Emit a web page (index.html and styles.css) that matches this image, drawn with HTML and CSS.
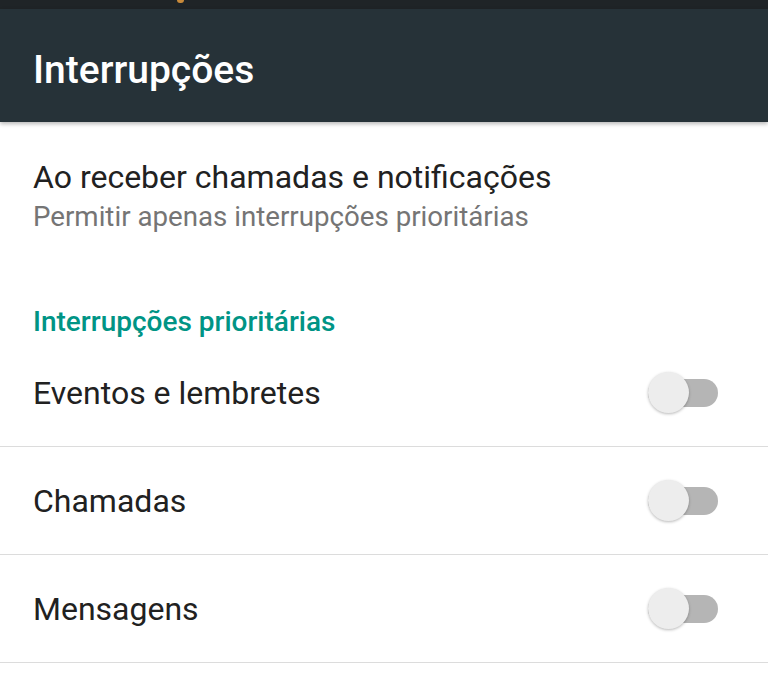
FILE: index.html
```html
<!DOCTYPE html>
<html lang="pt">
<head>
<meta charset="utf-8">
<title>Interrupções</title>
<link rel="stylesheet" href="styles.css">
</head>
<body>
<div class="statusbar"><span class="status-dot"></span></div>
<header class="toolbar">
  <h1 class="toolbar-title">Interrupções</h1>
</header>
<main class="content">
  <section class="pref">
    <div class="pref-title">Ao receber chamadas e notificações</div>
    <div class="pref-summary">Permitir apenas interrupções prioritárias</div>
  </section>
  <div class="category">Interrupções prioritárias</div>
  <div class="row">
    <span class="row-label">Eventos e lembretes</span>
    <span class="switch"><span class="track"></span><span class="thumb"></span></span>
  </div>
  <div class="row">
    <span class="row-label">Chamadas</span>
    <span class="switch"><span class="track"></span><span class="thumb"></span></span>
  </div>
  <div class="row">
    <span class="row-label">Mensagens</span>
    <span class="switch"><span class="track"></span><span class="thumb"></span></span>
  </div>
</main>
</body>
</html>
```
FILE: styles.css
```css
html, body {
  margin: 0;
  padding: 0;
  background: #ffffff;
  font-family: Roboto, "Noto Sans", "Liberation Sans", sans-serif;
  overflow: hidden;
}

.statusbar {
  height: 9px;
  background: #1f2427;
  position: relative;
}

.status-dot {
  position: absolute;
  left: 177px;
  top: 0;
  width: 7px;
  height: 3px;
  border-radius: 0 0 4px 4px;
  background: #c98a3a;
}

.toolbar {
  box-sizing: border-box;
  height: 113px;
  background: #263238;
  padding: 41px 33px 0;
  box-shadow: 0 2px 4px rgba(0, 0, 0, 0.28);
  position: relative;
  z-index: 1;
}

.toolbar-title {
  margin: 0;
  font-size: 39px;
  line-height: 40px;
  font-weight: 500;
  color: #ffffff;
}

.content {
  display: flex;
  flex-direction: column;
}

.pref {
  padding: 37px 33px 0;
}

.pref-title {
  font-size: 32px;
  line-height: 36px;
  color: #212121;
}

.pref-summary {
  margin-top: 6px;
  font-size: 27.7px;
  line-height: 32px;
  color: #757575;
}

.category {
  box-sizing: border-box;
  height: 106px;
  padding: 75px 33px 0;
  font-size: 28px;
  line-height: 28px;
  font-weight: 500;
  color: #009485;
}

.row {
  box-sizing: border-box;
  height: 108px;
  padding: 0 50px 0 33px;
  border-bottom: 1px solid #dcdcdc;
  display: flex;
  align-items: center;
  justify-content: space-between;
}

.row-label {
  font-size: 32px;
  line-height: 36px;
  color: #212121;
}

.switch {
  position: relative;
  width: 70px;
  height: 42px;
  flex: none;
}

.track {
  position: absolute;
  left: 0;
  top: 7px;
  width: 70px;
  height: 28px;
  border-radius: 14px;
  background: #b5b5b5;
}

.thumb {
  position: absolute;
  left: 0;
  top: 0;
  width: 41px;
  height: 41px;
  border-radius: 50%;
  background: #ededed;
  box-shadow: 0 1px 3px rgba(0, 0, 0, 0.28);
}
```
